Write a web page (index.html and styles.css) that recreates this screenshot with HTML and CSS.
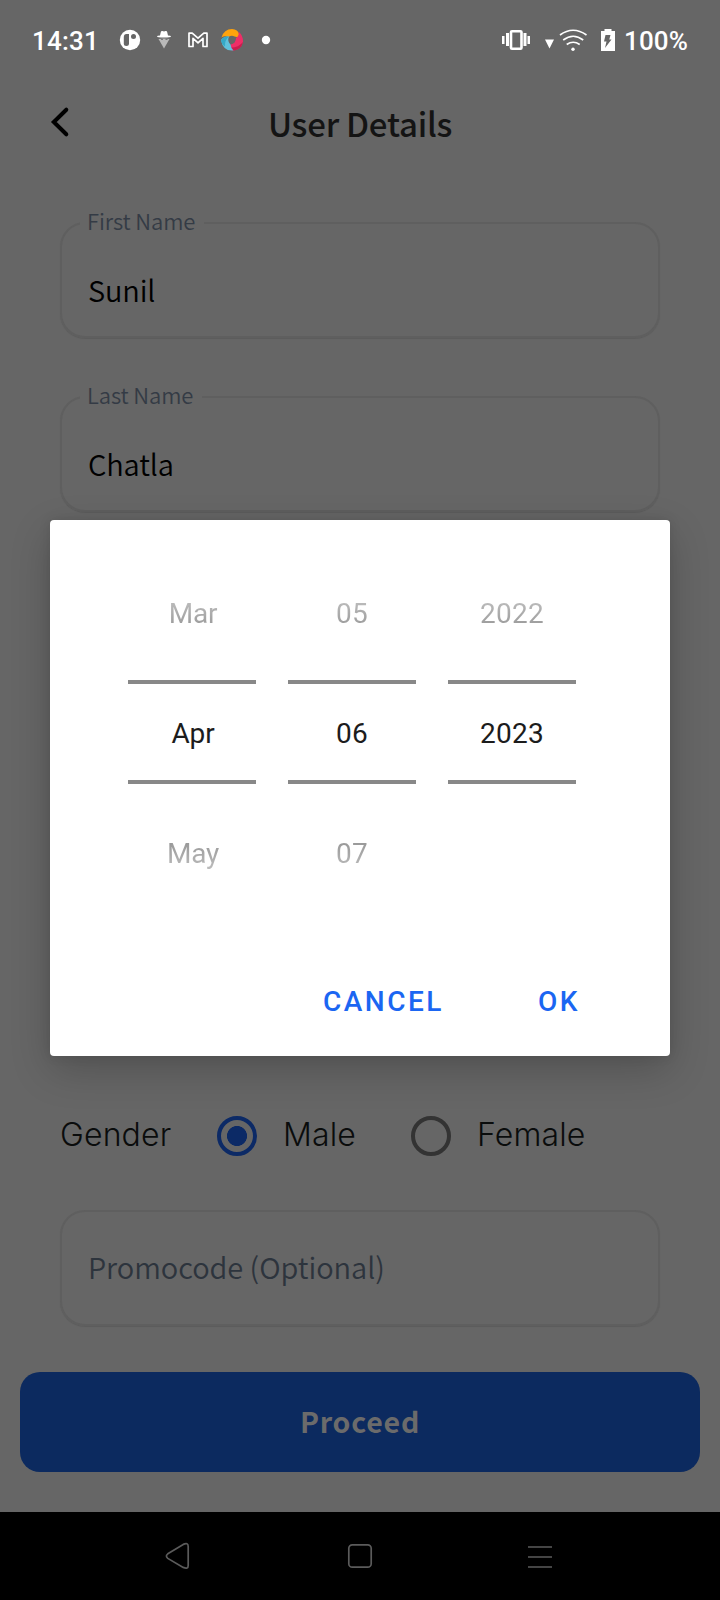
FILE: index.html
```html
<!DOCTYPE html>
<html lang="en">
<head>
<meta charset="utf-8">
<title>User Details</title>
<link rel="stylesheet" href="styles.css">
</head>
<body>
<div class="phone">
  <div class="status">
    <span class="clock">14:31</span>
    <svg class="status-icons" width="160" height="40" viewBox="115 20 160 40">
      <ellipse cx="130" cy="40" rx="10.2" ry="10.2" fill="#fff"/>
      <path d="M129 34h-2.5q-2.7 0-2.7 3v6.500q0 2.500 2.600 2.500t2.600-2.500z" fill="#666"/>
      <circle cx="133.500" cy="36.500" r="2.500" fill="#666"/>
      <path d="M160 35.500l.9-3.800q.4-1 1.600-.6l1.500.5 1.500-.5q1.200-.4 1.600.6l.9 3.800q3 .2 3 .9 0 1-7 1t-7-1q0-.7 3-.9z" fill="#fff"/>
      <path d="M158.500 39q5.500-1.200 11 0l-5.500 9.500z" fill="#b9b9b9"/>
      <path d="M161 39.500h2M165.500 39.500h2" stroke="#777" stroke-width="1.200"/>
      <path d="M189 46.500V33.200h3.200l5.800 5 5.800-5h3.200v13.300h-4v-8.200l-5 4.500-5-4.500v8.200z" fill="none" stroke="#fff" stroke-width="1.700" stroke-linejoin="round"/>
      <path d="M221.500 37.500Q224 29 232 29q6 .5 7 5l-.5 3.500-4-1q-3-1.500-6 .5-4-1.500-7 .5z" fill="#ffa30c"/>
      <path d="M238.500 31.500q5 4.500 4.500 10.500-2 8-9.500 8.500-3.500 0-3.500-3.500l.5-2.500q5.500-1 5.500-6.500 3.500-2 2.500-6.500z" fill="#ee2e67"/>
      <path d="M243 42q-2 8-9.500 8.500-3.500 0-3.500-3 8 .5 13-5.500z" fill="#c91d4e"/>
      <path d="M221 40q2.500-4 8-3.500-2 4.500 1.500 8 .5 4 3 6Q223 51.500 221 40z" fill="#5fc1dc"/>
      <path d="M221 40q2.500-4 8-3.500-4.500 3.500-4 10-3.500-2-4-6.500z" fill="#36a9c7"/>
      <circle cx="266" cy="40" r="4.200" fill="#fff"/>
    </svg>
    <svg class="status-icons system" width="120" height="40" viewBox="500 20 120 40">
      <g fill="#fff">
        <rect x="502" y="36" width="2.500" height="8"/><rect x="506" y="33" width="3" height="13"/>
        <rect x="523.500" y="33" width="3" height="13"/><rect x="527.500" y="36" width="2.500" height="8"/>
        <path d="M545 39.500h9l-4.500 9z"/>
        <circle cx="573" cy="49.300" r="1.700"/>
        <path d="M601 31h3.500v-2h7v2h3.500v20h-14z"/>
      </g>
      <rect x="511" y="31.200" width="10.500" height="17.600" rx="1" fill="none" stroke="#fff" stroke-width="2.600"/>
      <path d="M560 35q13-9.500 26.500 0M563.200 40q10-7.500 20 0M566.700 44.500q6.500-4.500 13 0" fill="none" stroke="#fff" stroke-width="1.700"/>
      <path d="M605.500 35h5l-1.200 4.500h2.200l-6.500 8.500 1.500-6.500h-2.500z" fill="#666"/>
    </svg>
    <span class="charge">100%</span>
  </div>
  <header class="header">
    <svg class="back" width="24" height="34" viewBox="48 105 24 34"><path d="M66.300 109.700L53.800 122l12.500 12.300" fill="none" stroke="#000" stroke-width="4" stroke-linecap="round"/></svg>
    <h1 class="title">User Details</h1>
  </header>
  <main class="form">
    <div class="field first"><label class="label">First Name</label><span class="value">Sunil</span></div>
    <div class="field last"><label class="label">Last Name</label><span class="value">Chatla</span></div>
    <div class="gender">
      <span class="gender-name">Gender</span>
      <span class="radio checked"></span><span class="choice male">Male</span>
      <span class="radio"></span><span class="choice">Female</span>
    </div>
    <div class="field promo"><span class="placeholder">Promocode (Optional)</span></div>
  </main>
  <div class="proceed">Proceed</div>
  <nav class="nav">
    <svg width="720" height="88" viewBox="0 1512 720 88" fill="none" stroke="#5b5b5b" stroke-width="1.700">
      <path d="M167.800 1553.800l15.400-9.400q5-2.200 5 2v19q0 4.200-5 2l-15.400-9q-2.800-2.300 0-4.600z"/>
      <rect x="348.800" y="1544.800" width="22.400" height="22.400" rx="3.500"/>
      <path d="M528 1547h24M528 1557h24M528 1567h24"/>
    </svg>
  </nav>
  <section class="dialog">
    <div class="wheels">
      <div class="wheel month"><span class="near above">Mar</span><span class="current">Apr</span><span class="near below">May</span></div>
      <div class="wheel"><span class="near above">05</span><span class="current">06</span><span class="near below">07</span></div>
      <div class="wheel"><span class="near above">2022</span><span class="current">2023</span></div>
    </div>
    <div class="actions"><span>CANCEL</span><span>OK</span></div>
  </section>
</div>
</body>
</html>
```

FILE: styles.css
```css
* { box-sizing: border-box; }
body { margin: 0; background: #666; }
.phone {
  position: relative;
  width: 720px;
  height: 1600px;
  overflow: hidden;
  display: flex;
  flex-direction: column;
  background: #666;
  font-family: "Noto Sans CJK SC", "Noto Sans", sans-serif;
  white-space: nowrap;
}
.status {
  height: 80px;
  padding: 20px 0 0 32px;
  display: flex;
  color: #fff;
  font: 500 26px/42px Roboto, sans-serif;
}
.clock { width: 83px; letter-spacing: .2px; }
.status-icons { flex: none; }
.system { margin-left: 225px; }
.charge { margin-left: 4px; letter-spacing: .1px; }
.header { height: 142px; display: flex; padding: 25px 0 0 48px; }
.back { flex: none; }
.title {
  width: 576px;
  margin: 0;
  text-align: center;
  color: #141414;
  font-size: 33px;
  font-weight: 500;
  line-height: 36px;
  letter-spacing: -.25px;
}
.form { height: 1150px; padding: 0 60px; }
.field {
  position: relative;
  height: 116px;
  padding: 0 26px;
  border: 2px solid #5f5f5f;
  border-radius: 25px;
  box-shadow: 0 1px 1px rgba(0, 0, 0, .1);
  font-size: 29px;
  font-weight: 350;
  line-height: 112px;
  letter-spacing: -.05px;
}
.last { margin-top: 58px; }
.label {
  position: absolute;
  left: 18px;
  top: -20px;
  padding: 0 9px 0 7px;
  background: #666;
  color: #343b45;
  font-size: 22px;
  line-height: 32px;
  letter-spacing: -.1px;
}
.value { display: block; padding-top: 9px; color: #000; line-height: 112px; letter-spacing: -.15px; }
.placeholder { display: block; margin-top: -2px; color: #2d343d; }
.gender {
  display: flex;
  align-items: center;
  margin-top: 604px;
  height: 40px;
  color: #0a0c0c;
  font: 300 32px/40px Inter, sans-serif;
  letter-spacing: .15px;
}
.gender-name { width: 157px; }
.gender-name, .choice { position: relative; top: -1px; }
.radio { width: 40px; height: 40px; border: 4px solid #333; border-radius: 50%; }
.checked {
  border-color: #0c2a66;
  background: radial-gradient(circle, #0c2a66 9.700px, transparent 10.300px);
}
.choice { margin-left: 26px; }
.male { width: 128px; }
.promo { margin-top: 54px; }
.proceed {
  height: 100px;
  margin: 0 20px;
  border-radius: 20px;
  background: #0c2a5f;
  color: #6b6b6b;
  font-size: 28.500px;
  font-weight: 700;
  line-height: 98px;
  letter-spacing: .8px;
  text-align: center;
}
.nav { height: 88px; margin-top: 40px; background: #000; }
.dialog {
  position: absolute;
  left: 50px;
  top: 520px;
  width: 620px;
  height: 536px;
  padding: 40px 78px;
  border-radius: 4px;
  background: #fff;
  box-shadow: 0 14px 40px rgba(0, 0, 0, .2), 0 0 12px rgba(0, 0, 0, .1);
  font: 400 28px/60px Roboto, sans-serif;
}
.wheels { display: flex; gap: 32px; height: 412px; }
.wheel { width: 128px; display: flex; flex-direction: column; text-align: center; letter-spacing: .3px; }
.month { letter-spacing: -.2px; padding-left: 1px; margin-right: -1px; }
.month .current { margin-left: -1px; margin-right: 1px; padding-left: 2px; }
.near { height: 60px; margin-top: 24px; color: transparent; background-clip: text; -webkit-background-clip: text; }
.above { background-image: linear-gradient(#c6c6c6 10px, #909090 50px); }
.below { background-image: linear-gradient(#8d8d8d 10px, #c3c3c3 50px); margin-top: 40px; }
.current {
  height: 104px;
  margin-top: 36px;
  border: solid #888;
  border-width: 4px 0;
  color: #1c1c1c;
  line-height: 99px;
}
.month { width: 129px; }
.actions {
  display: flex;
  gap: 94px;
  padding-left: 195px;
  color: #1b66f2;
  font-weight: 500;
  letter-spacing: 2.500px;
}
```
